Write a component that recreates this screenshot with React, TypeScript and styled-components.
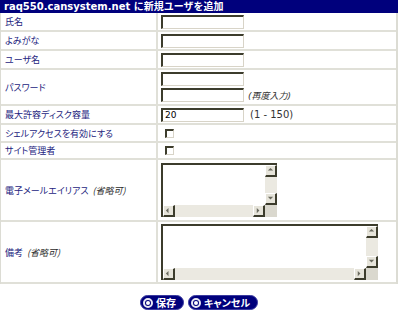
import * as React from 'react';
import styled, { createGlobalStyle } from 'styled-components';

const GlobalStyle = createGlobalStyle`
  body {
    margin: 0;
    background: #ffffff;
    font-family: 'DejaVu Sans', 'Noto Sans CJK JP', sans-serif;
  }
`;

const Page = styled.div`
  width: 398px;
`;

const Title = styled.div`
  height: 13px;
  line-height: 13px;
  padding-left: 4px;
  background: #00007c;
  color: #ffffff;
  font-size: 10px;
  font-weight: bold;
  white-space: nowrap;
  overflow: hidden;
`;

const Table = styled.div`
  border-left: 1px solid #dcdcd4;
  border-right: 2px solid #dcdcd4;
`;

const Row = styled.div<{ $h: number }>`
  display: grid;
  grid-template-columns: 157px 1fr;
  height: ${p => p.$h}px;
  border-bottom: 2px solid #e0e0d8;
`;

const Label = styled.div`
  display: flex;
  align-items: center;
  padding-left: 4px;
  border-right: 2px solid #e0e0d8;
  font-family: 'Noto Sans CJK JP', sans-serif;
  font-feature-settings: 'palt';
  font-size: 9px;
  color: #24247e;
  white-space: nowrap;
`;

const Optional = styled.span`
  margin-left: 4px;
  font-style: italic;
  color: #2a2a2a;
`;

const Cell = styled.div<{ $stack?: boolean }>`
  display: flex;
  flex-direction: ${p => (p.$stack ? 'column' : 'row')};
  align-items: ${p => (p.$stack ? 'flex-start' : 'center')};
  justify-content: ${p => (p.$stack ? 'center' : 'flex-start')};
  gap: 2px;
  padding-left: 3px;
`;

const Line = styled.div`
  display: flex;
  align-items: center;
`;

const TextInput = styled.input`
  box-sizing: border-box;
  width: 83px;
  height: 14px;
  margin: 0;
  padding: 0 2px;
  border-style: solid;
  border-width: 2px 1px 1px 2px;
  border-color: #3c3c2c #d8d4c8 #d8d4c8 #3c3c2c;
  background: #ffffff;
  font-family: 'DejaVu Sans', sans-serif;
  font-size: 9px;
  color: #000000;
  outline: none;
`;

const Hint = styled.span<{ $italic?: boolean }>`
  margin-left: 4px;
  font-family: 'DejaVu Sans', 'Noto Sans CJK JP', sans-serif;
  font-size: ${p => (p.$italic ? 9 : 10)}px;
  font-style: ${p => (p.$italic ? 'italic' : 'normal')};
  color: #333333;
`;

const Check = styled.input`
  appearance: none;
  box-sizing: border-box;
  width: 9px;
  height: 9px;
  margin: 0 0 0 4px;
  border-style: solid;
  border-width: 2px 1px 1px 2px;
  border-color: #3c3c2c #d8d4c8 #d8d4c8 #3c3c2c;
  background: #ffffff;
`;

const AreaFrame = styled.div<{ $w: number; $h: number }>`
  box-sizing: border-box;
  display: grid;
  grid-template-columns: 1fr 12px;
  grid-template-rows: 1fr 12px;
  width: ${p => p.$w}px;
  height: ${p => p.$h}px;
  border-style: solid;
  border-width: 2px 0 0 2px;
  border-color: #3c3c2c;
`;

const AreaText = styled.textarea`
  box-sizing: border-box;
  margin: 0;
  padding: 1px 2px;
  border: none;
  resize: none;
  overflow: hidden;
  background: #ffffff;
  font-family: 'DejaVu Sans', sans-serif;
  font-size: 9px;
  outline: none;
`;

const VBar = styled.div`
  display: flex;
  flex-direction: column;
  background: #ebe9e1;
`;

const HBar = styled.div`
  display: flex;
  background: #ebe9e1;
`;

const Track = styled.div`
  flex: 1;
`;

const ArrowBtn = styled.div`
  box-sizing: border-box;
  width: 12px;
  height: 12px;
  flex: none;
  display: flex;
  align-items: center;
  justify-content: center;
  background: #e6e4da;
  border-style: solid;
  border-width: 1px 2px 2px 1px;
  border-color: #ffffff #3c3c2c #3c3c2c #ffffff;
`;

const Corner = styled.div`
  background: #dad8ce;
`;

const Arrow = ({ dir }: { dir: 'up' | 'down' | 'left' | 'right' }) => {
  const pts = {
    up: '1,4 4,1 7,4',
    down: '1,2 4,5 7,2',
    left: '4,1 1,4 4,7',
    right: '2,1 5,4 2,7'
  }[dir];
  return (
    <svg width="7" height="7" viewBox="0 0 8 8">
      <polygon points={pts} fill="#6b6b60" />
    </svg>
  );
};

const ScrollArea = ({ w, h }: { w: number; h: number }) => (
  <AreaFrame $w={w} $h={h}>
    <AreaText wrap="off" />
    <VBar>
      <ArrowBtn>
        <Arrow dir="up" />
      </ArrowBtn>
      <Track />
      <ArrowBtn>
        <Arrow dir="down" />
      </ArrowBtn>
    </VBar>
    <HBar>
      <ArrowBtn>
        <Arrow dir="left" />
      </ArrowBtn>
      <Track />
      <ArrowBtn>
        <Arrow dir="right" />
      </ArrowBtn>
    </HBar>
    <Corner />
  </AreaFrame>
);

const Actions = styled.div`
  display: flex;
  justify-content: center;
  gap: 4px;
  margin-top: 11px;
`;

const Button = styled.button`
  box-sizing: border-box;
  display: flex;
  align-items: center;
  gap: 3px;
  height: 15px;
  margin: 0;
  padding: 0 7px 0 2px;
  border: 1px solid #3a3aa0;
  border-radius: 8px;
  background: #00007c;
  color: #ffffff;
  font-family: 'Noto Sans CJK JP', sans-serif;
  font-feature-settings: 'palt';
  font-size: 10px;
  font-weight: bold;
  line-height: 13px;
  cursor: pointer;
`;

const Bullet = styled.span`
  box-sizing: border-box;
  width: 10px;
  height: 10px;
  border-radius: 50%;
  border: 2px solid #e8e8f4;
  background: #00007c;
  display: flex;
  align-items: center;
  justify-content: center;

  &::after {
    content: '';
    width: 4px;
    height: 4px;
    border-radius: 50%;
    background: #ffffff;
  }
`;

export default function App(): JSX.Element {
  return (
    <Page>
      <GlobalStyle />
      <Title>raq550.cansystem.net に新規ユーザを追加</Title>
      <Table>
        <Row $h={17}>
          <Label>氏名</Label>
          <Cell>
            <TextInput />
          </Cell>
        </Row>
        <Row $h={17}>
          <Label>よみがな</Label>
          <Cell>
            <TextInput />
          </Cell>
        </Row>
        <Row $h={17}>
          <Label>ユーザ名</Label>
          <Cell>
            <TextInput />
          </Cell>
        </Row>
        <Row $h={34}>
          <Label>パスワード</Label>
          <Cell $stack>
            <TextInput type="password" />
            <Line>
              <TextInput type="password" />
              <Hint $italic>(再度入力)</Hint>
            </Line>
          </Cell>
        </Row>
        <Row $h={17}>
          <Label>最大許容ディスク容量</Label>
          <Cell>
            <TextInput defaultValue="20" />
            <Hint>(1 - 150)</Hint>
          </Cell>
        </Row>
        <Row $h={16}>
          <Label>シェルアクセスを有効にする</Label>
          <Cell>
            <Check type="checkbox" />
          </Cell>
        </Row>
        <Row $h={15}>
          <Label>サイト管理者</Label>
          <Cell>
            <Check type="checkbox" />
          </Cell>
        </Row>
        <Row $h={60}>
          <Label>
            電子メールエイリアス<Optional>(省略可)</Optional>
          </Label>
          <Cell>
            <ScrollArea w={116} h={54} />
          </Cell>
        </Row>
        <Row $h={60}>
          <Label>
            備考<Optional>(省略可)</Optional>
          </Label>
          <Cell>
            <ScrollArea w={217} h={56} />
          </Cell>
        </Row>
      </Table>
      <Actions>
        <Button>
          <Bullet />
          保存
        </Button>
        <Button>
          <Bullet />
          キャンセル
        </Button>
      </Actions>
    </Page>
  );
}
